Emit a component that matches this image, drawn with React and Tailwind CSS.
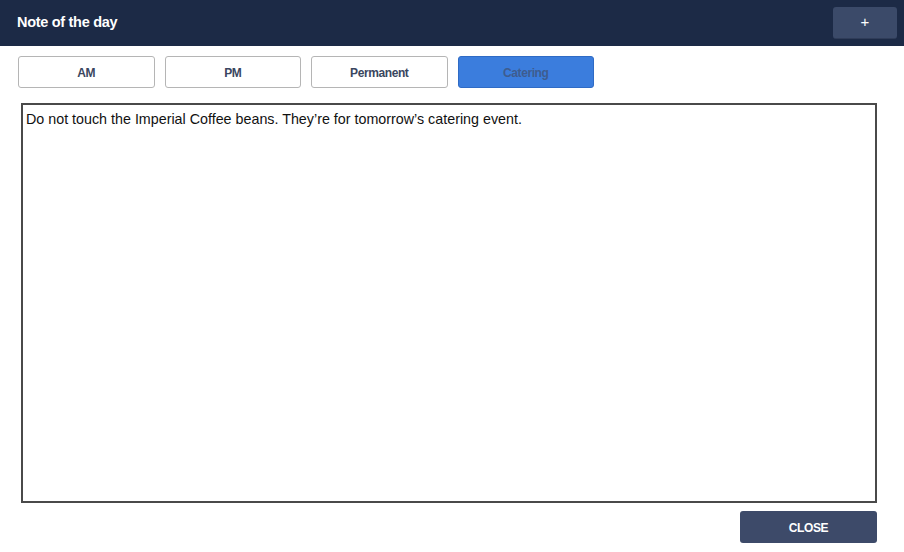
export default function App() {
  const tabs = ["AM", "PM", "Permanent", "Catering"];
  return (
    <div className="w-[904px] h-[552px] bg-white flex flex-col" style={{ fontFamily: '"Liberation Sans", Arial, sans-serif' }}>
      <div className="h-[46px] bg-[#1c2a46] flex items-center justify-between pl-[17px] pr-[7px]">
        <div className="text-white font-bold text-[14.5px] tracking-[-0.3px]">Note of the day</div>
        <button className="w-[64px] h-[32px] rounded-[3px] bg-[#3b4a69] text-white text-[15px] flex items-center justify-center border-b border-[#2f3c58]">+</button>
      </div>
      <div className="flex gap-[10px] pl-[18px] pt-[10px]">
        {tabs.map((t) =>
          t === "Catering" ? (
            <button key={t} className="w-[136.5px] h-[32px] pt-[2px] rounded-[3px] bg-[#3b7ddd] border border-[#2f6bc5] text-[#3e5c8f] text-[12px] tracking-[-0.4px] font-bold">{t}</button>
          ) : (
            <button key={t} className="w-[136.5px] h-[32px] pt-[2px] rounded-[3px] bg-white border border-[#b5b5b5] text-[#3a4660] text-[12px] tracking-[-0.4px] font-bold">{t}</button>
          )
        )}
      </div>
      <div className="ml-[21px] mt-[15px] w-[856px] h-[400px] border-2 border-[#4a4a4a] px-[3px] py-[4px]">
        <div className="text-[14.3px] text-[#111] leading-[20px]">
          Do not touch the Imperial Coffee beans. They’re for tomorrow’s catering event.
        </div>
      </div>
      <div className="flex justify-end pr-[27px] mt-[8px]">
        <button className="w-[137px] h-[32px] pt-[2px] rounded-[3px] bg-[#3d4a69] text-white text-[12px] tracking-[-0.4px] font-bold">CLOSE</button>
      </div>
    </div>
  );
}
